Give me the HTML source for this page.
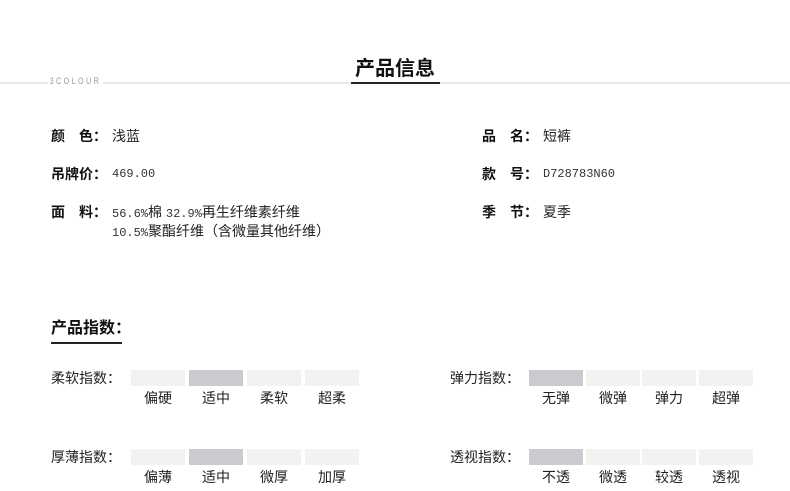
<!DOCTYPE html>
<html><head><meta charset="utf-8"><style>
body{margin:0;width:790px;height:491px;background:#fff;position:relative;overflow:hidden;font-family:"Liberation Sans","Noto Sans CJK SC",sans-serif;color:#222}
.a{position:absolute;white-space:nowrap;line-height:1}
.b{font-weight:bold;font-size:14px;color:#111}
.v{font-size:14px;color:#222}
.m{font-family:"Liberation Mono","Noto Sans CJK SC",monospace;font-size:12px;color:#333}
.bar{position:absolute;height:16px;width:54px;background:#f3f2f0}
.bar.on{background:#cbcacf}
.l{font-size:14px;color:#222}
</style></head><body>
<div class="a" style="left:0;top:82px;width:790px;height:2px;background:#e8e8e8"></div>
<div class="a" style="left:48px;top:77px;font-size:9px;letter-spacing:3px;color:#999;background:#fff;padding:0 2px;transform:scaleX(0.8);transform-origin:left">3COLOUR</div>
<div class="a" style="left:355px;top:59px;font-size:20px;font-weight:bold;color:#111">产品信息</div>
<div class="a" style="left:351px;top:82px;width:89px;height:2px;background:#222"></div>

<div class="a b" style="left:51px;top:129px">颜&emsp;色：</div><div class="a v" style="left:112px;top:129px">浅蓝</div>
<div class="a b" style="left:51px;top:167px">吊牌价：</div><div class="a m" style="left:112px;top:168px">469.00</div>
<div class="a b" style="left:51px;top:205px">面&emsp;料：</div>
<div class="a v" style="left:112px;top:205px"><span class="m">56.6%</span>棉 <span class="m">32.9%</span>再生纤维素纤维</div>
<div class="a v" style="left:112px;top:224px"><span class="m">10.5%</span>聚酯纤维（含微量其他纤维）</div>

<div class="a b" style="left:482px;top:129px">品&emsp;名：</div><div class="a v" style="left:543px;top:129px">短裤</div>
<div class="a b" style="left:482px;top:167px">款&emsp;号：</div><div class="a m" style="left:543px;top:168px">D728783N60</div>
<div class="a b" style="left:482px;top:205px">季&emsp;节：</div><div class="a v" style="left:543px;top:205px">夏季</div>

<div class="a" style="left:51px;top:321px;font-size:16px;font-weight:bold;color:#111">产品指数：</div>
<div class="a" style="left:51px;top:342px;width:71px;height:2px;background:#222"></div>

<div class="a l" style="left:51px;top:371px">柔软指数：</div>
<div class="bar" style="left:131px;top:370px"></div><div class="bar on" style="left:189px;top:370px"></div><div class="bar" style="left:247px;top:370px"></div><div class="bar" style="left:305px;top:370px"></div>
<div class="a l" style="left:144px;top:391px">偏硬</div><div class="a l" style="left:202px;top:391px">适中</div><div class="a l" style="left:260px;top:391px">柔软</div><div class="a l" style="left:318px;top:391px">超柔</div>

<div class="a l" style="left:51px;top:450px">厚薄指数：</div>
<div class="bar" style="left:131px;top:449px"></div><div class="bar on" style="left:189px;top:449px"></div><div class="bar" style="left:247px;top:449px"></div><div class="bar" style="left:305px;top:449px"></div>
<div class="a l" style="left:144px;top:470px">偏薄</div><div class="a l" style="left:202px;top:470px">适中</div><div class="a l" style="left:260px;top:470px">微厚</div><div class="a l" style="left:318px;top:470px">加厚</div>

<div class="a l" style="left:450px;top:371px">弹力指数：</div>
<div class="bar on" style="left:529px;top:370px"></div><div class="bar" style="left:586px;top:370px"></div><div class="bar" style="left:642px;top:370px"></div><div class="bar" style="left:699px;top:370px"></div>
<div class="a l" style="left:542px;top:391px">无弹</div><div class="a l" style="left:599px;top:391px">微弹</div><div class="a l" style="left:655px;top:391px">弹力</div><div class="a l" style="left:712px;top:391px">超弹</div>

<div class="a l" style="left:450px;top:450px">透视指数：</div>
<div class="bar on" style="left:529px;top:449px"></div><div class="bar" style="left:586px;top:449px"></div><div class="bar" style="left:642px;top:449px"></div><div class="bar" style="left:699px;top:449px"></div>
<div class="a l" style="left:542px;top:470px">不透</div><div class="a l" style="left:599px;top:470px">微透</div><div class="a l" style="left:655px;top:470px">较透</div><div class="a l" style="left:712px;top:470px">透视</div>
</body></html>
